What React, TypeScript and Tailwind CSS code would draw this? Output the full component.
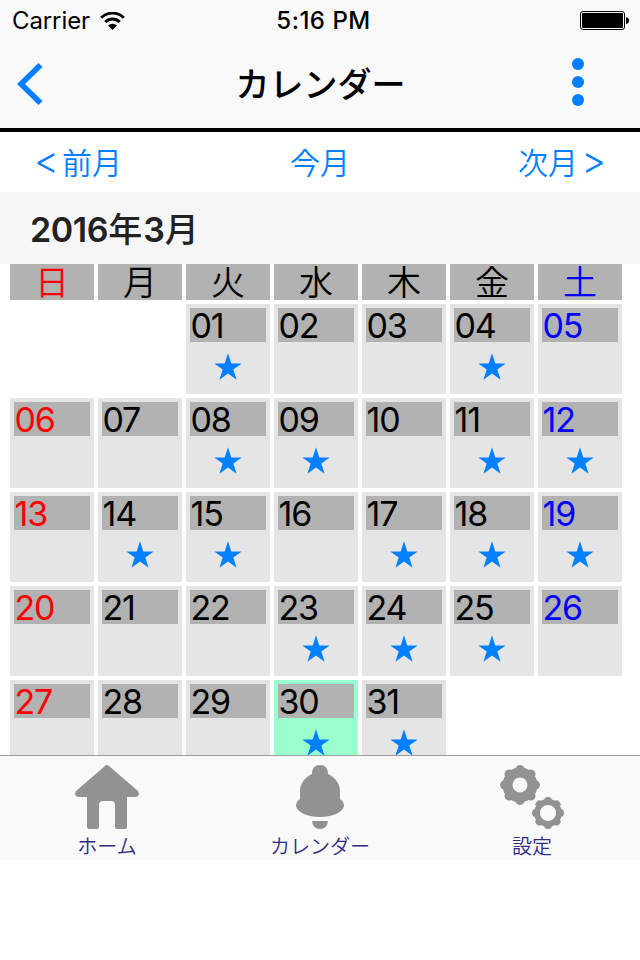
import type { ReactNode } from "react";

const weekdays = ["日", "月", "火", "水", "木", "金", "土"];

// March 2016 starts on a Tuesday
const LEADING_BLANKS = 2;
const DAYS_IN_MONTH = 31;
const TODAY = 30;
const starred = [1, 4, 8, 9, 11, 12, 14, 15, 17, 18, 19, 23, 24, 25, 30, 31];

function dayColor(column: number) {
  if (column === 0) return "text-[#ff0000]";
  if (column === 6) return "text-[#0000ff]";
  return "text-black";
}

function Star() {
  return (
    <svg viewBox="0 0 28 28" className="mx-auto mt-[11px] block size-7 fill-[#007fff]">
      <path d="M14 0.3 17.3 10.4H27.7L19.3 16.6 22.6 26.8 14 20.5 5.4 26.8 8.7 16.6 0.3 10.4H10.7Z" />
    </svg>
  );
}

function StatusBar() {
  return (
    <div className="grid h-10 grid-cols-3 items-center pt-px pl-3 pr-[11px] text-[24px] leading-none">
      <div className="flex items-center gap-[10px]">
        <span className="tracking-[-0.1px]">Carrier</span>
        <svg viewBox="0 0 25 18" className="h-[18px] w-[25px]">
          <path d="M1.2 5.7A16.2 16.2 0 0 1 23.8 5.7" fill="none" stroke="black" strokeWidth="3" />
          <path d="M5.2 10A10.4 10.4 0 0 1 19.8 10" fill="none" stroke="black" strokeWidth="2.8" />
          <path d="M12.5 18 8 13.5A6.4 6.4 0 0 1 17 13.5Z" />
        </svg>
      </div>
      <span className="pl-[6px] text-center font-medium tracking-[0.5px]">5:16 PM</span>
      <svg viewBox="0 0 49 19" className="h-[19px] w-[49px] justify-self-end">
        <rect x="0.5" y="0.5" width="44" height="18" rx="2.5" fill="none" stroke="black" />
        <rect x="2" y="2" width="41" height="15" rx="1" />
        <path d="M46 6Q49 6.5 49 9.5T46 13Z" />
      </svg>
    </div>
  );
}

function NavBar() {
  return (
    <div className="flex h-[88px] items-center justify-between pl-[17px] pr-14">
      <svg viewBox="0 0 26 42" className="h-[42px] w-[26px] fill-[#007fff]">
        <path d="M0 21 21.5 0 25.5 4 8 21 25.5 38 21.5 42Z" />
      </svg>
      <h1 className="pl-[26px] pt-[2px] text-[34px] font-medium leading-none">カレンダー</h1>
      <svg viewBox="0 0 12 48" className="mb-1 h-12 w-3 fill-[#007fff]">
        <circle cx="6" cy="6" r="6" />
        <circle cx="6" cy="24" r="6" />
        <circle cx="6" cy="42" r="6" />
      </svg>
    </div>
  );
}

function DayCell({ day, column }: { day: number; column: number }) {
  return (
    <div className={day === TODAY ? "h-[90px] bg-[#99ffcc] p-1" : "h-[90px] bg-[#e5e5e5] p-1"}>
      <div
        className={`h-[34px] bg-[#b2b2b2] pl-[0.5px] text-[34px] leading-[35px] tracking-[-1.2px] ${dayColor(column)}`}
      >
        {String(day).padStart(2, "0")}
      </div>
      {starred.includes(day) ? <Star /> : null}
    </div>
  );
}

function HomeIcon() {
  return (
    <svg viewBox="0 0 64 64" className="size-16 fill-[#929292]">
      <path d="M30 1Q32-1 34 1L63 26Q64 28 64 29.500Q63 32 60 32H52V62Q52 64 50 64H42Q40 64 40 62V40Q40 36 36 36H28Q24 36 24 40V62Q24 64 22 64H14Q12 64 12 62V32H4Q1 32 0 29.500Q0 28 1 26Z" />
    </svg>
  );
}

function BellIcon() {
  return (
    <svg viewBox="0 0 48 64" className="h-16 w-12 fill-[#929292]">
      <path d="M24 0C29 0 32 3 32 9C39 12 44 19 44 26V34C47 36 48 38 48 41C46 48 36 52 24 52S2 48 0 41C0 38 1 36 4 34V26C4 19 9 12 16 9C16 3 19 0 24 0Z" />
      <path d="M16 56H32Q31 64 24 64T16 56Z" />
    </svg>
  );
}

const teeth = [0, 45, 90, 135, 180, 225, 270, 315];

function GearsIcon() {
  return (
    <svg viewBox="0 0 64 64" className="size-16 fill-[#929292] stroke-[#929292]">
      <circle cx="20" cy="20" r="12.500" fill="none" strokeWidth="10" />
      {teeth.map((angle) => (
        <circle key={angle} cx="20" cy="4.700" r="4.700" stroke="none" transform={`rotate(${angle} 20 20)`} />
      ))}
      <circle cx="48" cy="48" r="11" fill="none" strokeWidth="5.800" />
      {teeth.map((angle) => (
        <circle key={angle} cx="48" cy="36" r="4" stroke="none" transform={`rotate(${angle} 48 48)`} />
      ))}
    </svg>
  );
}

function Tab({ label, children }: { label: string; children: ReactNode }) {
  return (
    <div className="flex flex-col items-center pt-[9px]">
      {children}
      <span className="mt-[7px] text-[20px] font-[350] leading-[22px] text-[#2d2d86]">{label}</span>
    </div>
  );
}

export default function App() {
  return (
    <div
      lang="ja"
      className="flex h-[960px] w-[640px] flex-col overflow-hidden bg-white font-['Inter','Noto_Sans_CJK_JP',sans-serif] text-black"
    >
      <header className="h-[132px] shrink-0 border-b-4 border-black bg-[#f9f9f9]">
        <StatusBar />
        <NavBar />
      </header>

      <nav className="flex h-[60px] shrink-0 items-center justify-between px-[34px] pt-px text-[30px] font-[350] leading-none text-[#007fff]">
        <span className="flex items-center">
          <span className="w-7 pb-[5px] text-[38px] font-light">&lt;</span>前月
        </span>
        <span>今月</span>
        <span className="flex items-center">
          次月<span className="flex w-7 justify-end pb-[5px] text-[38px] font-light">&gt;</span>
        </span>
      </nav>

      <h2 className="h-[72px] shrink-0 bg-[#f6f6f6] pl-[30px] pt-[2px] text-[34px] font-medium leading-[72px] text-[#222222]">
        <span className="font-semibold tracking-[-0.4px]">2016</span>年
        <span className="pl-px font-semibold">3</span>月
      </h2>

      <main className="h-[491px] shrink-0 pl-[10px]">
        <div className="grid w-[612px] grid-cols-7 gap-1">
          {weekdays.map((name, column) => (
            <div
              key={name}
              className={`h-9 bg-[#b2b2b2] text-center text-[34px] font-[350] leading-[38px] ${dayColor(column)}`}
            >
              {name}
            </div>
          ))}
          {Array.from({ length: LEADING_BLANKS }, (_, i) => (
            <div key={`blank-${i}`} />
          ))}
          {Array.from({ length: DAYS_IN_MONTH }, (_, i) => (
            <DayCell key={i} day={i + 1} column={(i + LEADING_BLANKS) % 7} />
          ))}
        </div>
      </main>

      {/* stays on top of the last calendar row */}
      <footer className="relative z-10 grid h-[105px] shrink-0 grid-cols-[212px_214px_210px] border-t border-[#a0a0a0] bg-[#f9f9f9] pl-px">
        <Tab label="ホーム">
          <HomeIcon />
        </Tab>
        <Tab label="カレンダー">
          <BellIcon />
        </Tab>
        <Tab label="設定">
          <GearsIcon />
        </Tab>
      </footer>
    </div>
  );
}
